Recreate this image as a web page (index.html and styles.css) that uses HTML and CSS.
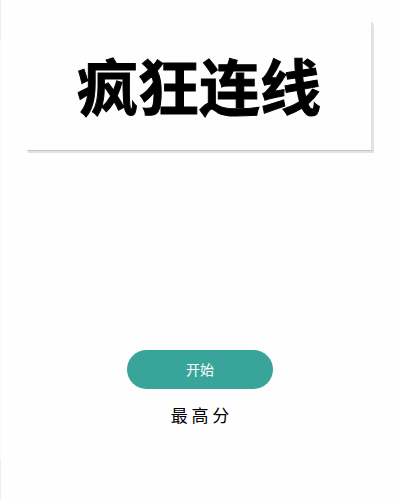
FILE: index.html
```html
<!DOCTYPE html>
<html lang="zh-CN">
<head>
    <meta charset="UTF-8">
    <meta name="viewport" content="width=device-width, initial-scale=1.0">
    <title>疯狂连线</title>
    <link rel="stylesheet" href="styles.css">
</head>
<body>

    <main class="home">
        <header class="title-card">
            <h1 class="title">疯狂连线</h1>
        </header>

        <div class="menu">
            <button class="start-button" type="button">开始</button>
            <p class="best-score">最 高 分</p>
        </div>
    </main>

</body>
</html>
```

FILE: styles.css
```css
* {
    box-sizing: border-box;
}

body {
    margin: 0;
    background-color: #fefefe;
    color: #000;
    font-family: "Noto Sans CJK SC", sans-serif;
}

.home {
    display: flex;
    flex-direction: column;
    justify-content: space-between;
    min-height: 100vh;
    padding: 22px 27px 72px;
    /* thin edge, darker at both ends */
    background: linear-gradient(#eee 40px, #fafafa 40px, #fafafa calc(100% - 40px), #eee calc(100% - 40px)) left top / 1px 100% no-repeat;
}

.title-card {
    padding: 18px 0 20px;
    border-right: 2px solid #e2e2e2;
    background-color: #fefefe;
    box-shadow: 0 1px 0 #c8c8c8, 1px 3px 0 #e2e2e2;
    text-align: center;
}

.title {
    margin: 0;
    font-size: 61px;
    font-weight: 700;
    line-height: 90px;
    -webkit-text-stroke: 1px #000;
}

.menu {
    display: flex;
    flex-direction: column;
    align-items: center;
    gap: 12px;
}

.start-button {
    width: 146px;
    height: 39px;
    padding: 0 0 2px;
    border: none;
    border-radius: 20px;
    background-color: #39a59a;
    color: #fff;
    font-family: inherit;
    font-size: 14px;
    cursor: pointer;
}

.start-button:hover {
    background-color: #2f9186;
}

.best-score {
    margin: 0;
    font-size: 17px;
    line-height: 27px;
}
```
